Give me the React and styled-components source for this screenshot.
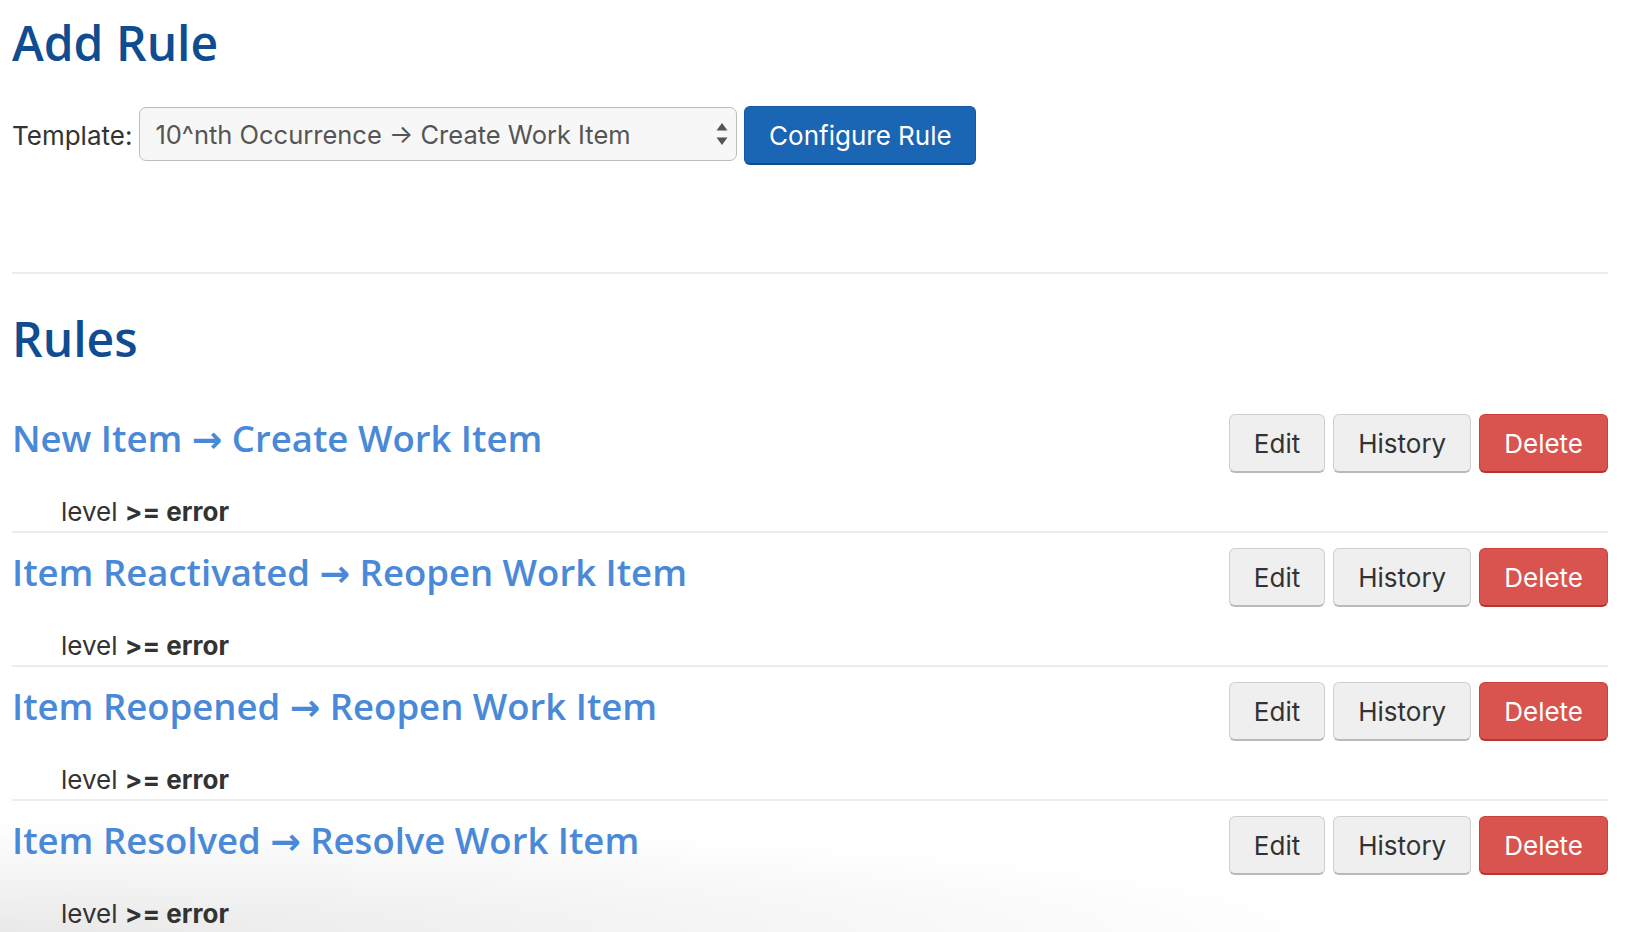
import React from "react";
import styled, { createGlobalStyle } from "styled-components";

const GlobalStyle = createGlobalStyle`
  html, body { margin: 0; padding: 0; background: #fff; }
  body { font-family: Inter, "Noto Sans", "DejaVu Sans", sans-serif; color: #333; }
  * { box-sizing: border-box; }
`;

const Page = styled.div`
  height: 100vh;
  overflow: hidden;
  padding: 0 22px 0 12px;
  background:
    radial-gradient(ellipse 1350px 110px at 0% 100%, #e9e9e9 0%, #f3f3f3 45%, rgba(255, 255, 255, 0) 100%),
    #fff;
`;

const Heading = styled.h2`
  margin: ${(p) => p.$mt}px 0 0;
  font-family: "Open Sans", "Noto Sans", sans-serif;
  font-weight: 600;
  font-size: 48px;
  line-height: 58px;
  color: #0f4c90;
`;

const TemplateRow = styled.div`
  margin-top: 34px;
  display: flex;
  align-items: flex-start;
  height: 59px;
`;

const Label = styled.label`
  align-self: center;
  font-size: 26px;
  color: #333;
  margin-right: 7px;
`;

const SelectWrap = styled.div`
  position: relative;
  margin-top: 1px;
  width: 598px;
  height: 54px;
`;

const Select = styled.select`
  appearance: none;
  -webkit-appearance: none;
  width: 100%;
  height: 100%;
  border: 1px solid #bdbdbd;
  border-radius: 7px;
  background: #f7f7f7;
  padding: 0 40px 0 15px;
  font-family: Inter, "DejaVu Sans", sans-serif;
  font-size: 25.5px;
  color: #555;
  outline: none;
`;

const Arrows = styled.svg`
  position: absolute;
  right: 9px;
  top: 50%;
  transform: translateY(-50%);
  pointer-events: none;
`;

const PrimaryButton = styled.button`
  margin-left: 7px;
  height: 59px;
  width: 232px;
  padding: 0;
  border: 1px solid #17599f;
  border-bottom: 2px solid #114c8a;
  border-radius: 6px;
  background: #1b65b5;
  color: #fff;
  font-family: Inter, sans-serif;
  font-size: 26px;
  cursor: pointer;
`;

const Divider = styled.hr`
  margin: 107px 0 0;
  border: 0;
  height: 2px;
  background: #ececec;
`;

const RuleList = styled.div`
  margin-top: 46px;
`;

const RuleItem = styled.div`
  border-bottom: 2px solid #ececec;
  padding-bottom: 5px;
  & + & {
    margin-top: 15px;
  }
`;

const RuleHeader = styled.div`
  display: flex;
  justify-content: space-between;
  align-items: flex-start;
`;

const RuleTitle = styled.a`
  margin-top: 1px;
  font-family: "Open Sans", "Noto Sans", "DejaVu Sans", sans-serif;
  font-weight: 600;
  font-size: 36.5px;
  line-height: 46px;
  color: #4a89d8;
  text-decoration: none;
  cursor: pointer;
`;

const ButtonGroup = styled.div`
  display: flex;
  gap: 8px;
`;

const ActionButton = styled.button`
  height: 59px;
  padding: 0 24px;
  border-radius: 6px;
  font-family: Inter, sans-serif;
  font-size: 26px;
  cursor: pointer;
  border: 1px solid ${(p) => (p.$danger ? "#c9413d" : "#cfcfcf")};
  border-bottom: 2px solid ${(p) => (p.$danger ? "#b23632" : "#b9b9b9")};
  background: ${(p) => (p.$danger ? "#d9534f" : "#efefef")};
  color: ${(p) => (p.$danger ? "#fff" : "#333")};
`;

const Condition = styled.div`
  margin-top: 24px;
  padding-left: 49px;
  font-size: 26px;
  line-height: 29px;
  color: #333;
  strong { font-weight: 700; }
`;

const rules = [
  "New Item \u2192 Create Work Item",
  "Item Reactivated \u2192 Reopen Work Item",
  "Item Reopened \u2192 Reopen Work Item",
  "Item Resolved \u2192 Resolve Work Item",
];

export default function App() {
  return (
    <>
      <GlobalStyle />
      <Page>
        <Heading $mt={14}>Add Rule</Heading>
        <TemplateRow>
          <Label>Template:</Label>
          <SelectWrap>
            <Select defaultValue="a">
              <option value="a">10^nth Occurrence {"\u2192"} Create Work Item</option>
            </Select>
            <Arrows width="12" height="24" viewBox="0 0 12 24">
              <path d="M6 1 L11.5 8.5 L0.5 8.5 Z" fill="#555" />
              <path d="M6 23 L11.5 15.5 L0.5 15.5 Z" fill="#555" />
            </Arrows>
          </SelectWrap>
          <PrimaryButton>Configure Rule</PrimaryButton>
        </TemplateRow>
        <Divider />
        <Heading $mt={36}>Rules</Heading>
        <RuleList>
          {rules.map((r) => (
            <RuleItem key={r}>
              <RuleHeader>
                <RuleTitle>{r}</RuleTitle>
                <ButtonGroup>
                  <ActionButton>Edit</ActionButton>
                  <ActionButton>History</ActionButton>
                  <ActionButton $danger>Delete</ActionButton>
                </ButtonGroup>
              </RuleHeader>
              <Condition>
                level <strong>&gt;= error</strong>
              </Condition>
            </RuleItem>
          ))}
        </RuleList>
      </Page>
    </>
  );
}
